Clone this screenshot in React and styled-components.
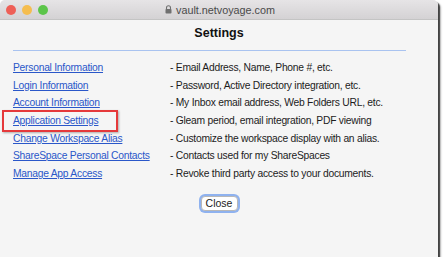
import styled, { createGlobalStyle } from "styled-components";

const Global = createGlobalStyle`
  html, body { margin: 0; padding: 0; background: #ffffff; }
  body { font-family: "Liberation Sans", Arial, sans-serif; }
`;

const rows = [
  ["Personal Information", "- Email Address, Name, Phone #, etc."],
  ["Login Information", "- Password, Active Directory integration, etc."],
  ["Account Information", "- My Inbox email address, Web Folders URL, etc."],
  ["Application Settings", "- Gleam period, email integration, PDF viewing", true],
  ["Change Workspace Alias", "- Customize the workspace display with an alias."],
  ["ShareSpace Personal Contacts", "- Contacts used for my ShareSpaces"],
  ["Manage App Access", "- Revoke third party access to your documents."],
];

export default function App() {
  return (
    <>
      <Global />
      <Window>
        <TitleBar>
          <Lights>
            <Light color="#ee5f57" />
            <Light color="#f5bd4f" />
            <Light color="#5cc54a" />
          </Lights>
          <Url>
            <svg width="7" height="9" viewBox="0 0 7 9">
              <path d="M1.5 4V2.8a2 2 0 0 1 4 0V4" fill="none" stroke="#707070" strokeWidth="1.1" />
              <rect x="0.5" y="4" width="6" height="4.6" rx="0.8" fill="#707070" />
            </svg>
            vault.netvoyage.com
          </Url>
        </TitleBar>
        <Content>
          <Heading>Settings</Heading>
          <Rule />
          <List>
            {rows.map(([link, desc, marked]) => (
              <Row key={link}>
                <LinkCell>
                  {marked && <Marker />}
                  <Link href="#">{link}</Link>
                </LinkCell>
                <Desc>{desc}</Desc>
              </Row>
            ))}
          </List>
          <ButtonRow>
            <CloseButton>Close</CloseButton>
          </ButtonRow>
        </Content>
      </Window>
    </>
  );
}

const Window = styled.div`
  width: 438px;
  height: 257px;
  background: #f5f5f5;
  border-radius: 5px 5px 0 0;
  box-shadow: 2px 2px 1px rgba(0, 0, 0, 0.65), 3px 3px 2px rgba(0, 0, 0, 0.25);
  display: flex;
  flex-direction: column;
  overflow: hidden;
`;

const TitleBar = styled.div`
  height: 19px;
  flex: none;
  background: linear-gradient(#e6e4e6, #d4d2d4);
  border-bottom: 1px solid #c4c4c4;
  display: flex;
  align-items: center;
  position: relative;
`;

const Lights = styled.div`
  display: flex;
  gap: 6px;
  padding-left: 6px;
`;

const Light = styled.span`
  width: 10px;
  height: 10px;
  border-radius: 50%;
  background: ${(p) => p.color};
`;

const Url = styled.div`
  position: absolute;
  left: 0;
  right: 0;
  top: 0;
  bottom: 0;
  display: flex;
  align-items: center;
  justify-content: center;
  gap: 4px;
  font-size: 10.8px;
  color: #4a4a4a;
  padding-left: 2px;
`;

const Content = styled.div`
  padding: 0 13px;
  display: flex;
  flex-direction: column;
`;

const Heading = styled.div`
  text-align: center;
  font-weight: bold;
  font-size: 12.5px;
  color: #111;
  margin-top: 6px;
  height: 16px;
`;

const Rule = styled.div`
  height: 1px;
  width: 393px;
  background: #a9c3f0;
  margin-top: 8px;
`;

const List = styled.div`
  display: flex;
  flex-direction: column;
  margin-top: 8px;
`;

const Row = styled.div`
  display: grid;
  grid-template-columns: 157px 1fr;
  height: 17.6px;
  align-items: center;
  font-size: 10.3px;
  letter-spacing: -0.25px;
`;

const LinkCell = styled.div`
  position: relative;
`;

const Marker = styled.span`
  position: absolute;
  left: -11px;
  top: -5px;
  width: 112px;
  height: 18px;
  border: 2px solid #e5393b;
  box-shadow: 1px 1px 2px rgba(0, 0, 0, 0.3);
`;

const Link = styled.a`
  color: #2a57c9;
  text-decoration: underline;
`;

const Desc = styled.div`
  color: #1c1c1c;
`;

const ButtonRow = styled.div`
  display: flex;
  justify-content: center;
  margin-top: 14px;
`;

const CloseButton = styled.button`
  font-family: "Liberation Sans", Arial, sans-serif;
  font-size: 10.5px;
  color: #222;
  background: #fff;
  border: 1px solid #b8b8b8;
  border-radius: 4px;
  box-shadow: 0 0 0 2px #8fb2ef;
  width: 37px;
  height: 15px;
  padding: 0;
  line-height: 13px;
`;
